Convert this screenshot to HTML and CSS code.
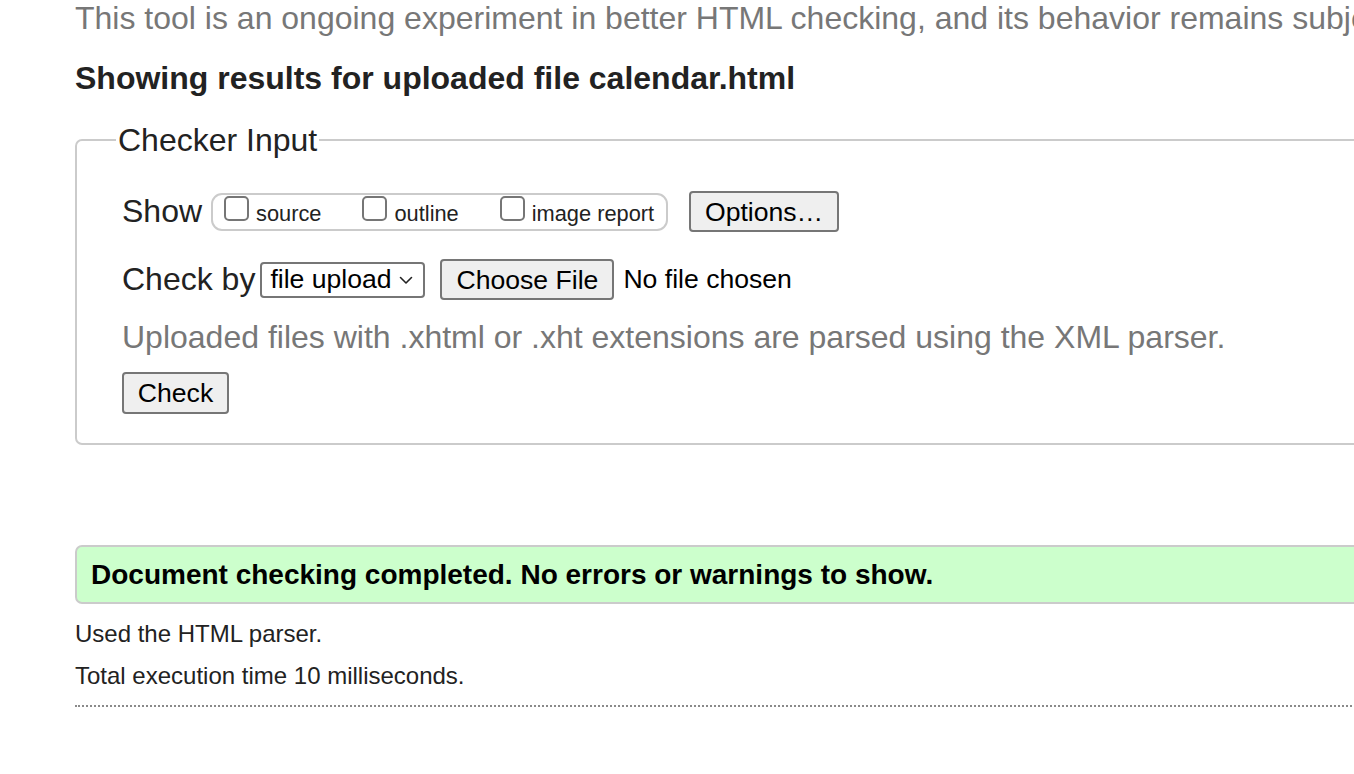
FILE: index.html
```html
<!DOCTYPE html>
<html lang="en">
<head>
<meta charset="utf-8">
<title>Nu Html Checker</title>
<link rel="stylesheet" href="styles.css">
</head>
<body>
<main class="page">
  <p class="intro">This tool is an ongoing experiment in better HTML checking, and its behavior remains subject to change</p>
  <h2 class="results-title">Showing results for uploaded file calendar.html</h2>
  <form class="checker-form">
    <fieldset class="checker">
      <legend class="checker-legend">Checker Input</legend>
      <div class="row row-show">
        <span class="row-label">Show</span>
        <div class="show-group">
          <label class="opt"><span class="cb"></span><span class="opt-text">source</span></label>
          <label class="opt"><span class="cb"></span><span class="opt-text">outline</span></label>
          <label class="opt"><span class="cb"></span><span class="opt-text">image report</span></label>
        </div>
        <button type="button" class="btn btn-options">Options…</button>
      </div>
      <div class="row row-check">
        <span class="row-label">Check by</span>
        <span class="select">file upload<svg class="chev" width="14" height="9" viewBox="0 0 14 9"><path d="M1.5 1.5 L7 7 L12.5 1.5" fill="none" stroke="#222" stroke-width="1.6" stroke-linecap="round" stroke-linejoin="round"/></svg></span>
        <button type="button" class="btn btn-file">Choose File</button>
        <span class="file-status">No file chosen</span>
      </div>
      <p class="hint">Uploaded files with .xhtml or .xht extensions are parsed using the XML parser.</p>
      <button type="button" class="btn btn-check">Check</button>
    </fieldset>
  </form>
  <div class="success">Document checking completed. No errors or warnings to show.</div>
  <p class="meta meta-first">Used the HTML parser.</p>
  <p class="meta">Total execution time 10 milliseconds.</p>
  <hr class="dotted">
</main>
</body>
</html>
```

FILE: styles.css
```css
html, body {
  margin: 0;
  padding: 0;
  overflow: hidden;
  background: #fff;
}

body {
  font-family: "Liberation Sans", Arial, Helvetica, sans-serif;
  color: #222;
}

.page {
  margin-left: 75px;
  width: 1400px;
}

.intro {
  margin: 0;
  font-size: 32px;
  line-height: 36.8px;
  color: #777;
  white-space: nowrap;
}

.results-title {
  margin: 23px 0 0 0;
  font-size: 32px;
  line-height: 36.8px;
  font-weight: bold;
  color: #222;
}

.checker-form {
  margin: 0;
}

.checker {
  margin: 25px 0 0 0;
  padding: 33px 0 29px 45px;
  border: 2px solid #cbcbcb;
  border-radius: 7px;
  min-width: 0;
}

.checker-legend {
  margin-left: -6px;
  padding: 0 2px;
  font-size: 32px;
  line-height: 36.8px;
  color: #222;
}

.row {
  display: flex;
  align-items: center;
  height: 41px;
}

.row-label {
  font-size: 32px;
  line-height: 36.8px;
  color: #222;
}

.row-show {
  margin-bottom: 27px;
}

.show-group {
  display: flex;
  align-items: center;
  box-sizing: border-box;
  height: 38px;
  margin-left: 9px;
  padding: 0 12px 0 11px;
  border: 2px solid #cbcbcb;
  border-radius: 11px;
  gap: 41px;
}

.opt {
  display: flex;
  align-items: center;
  gap: 7px;
  font-size: 21.8px;
  color: #222;
}

.cb {
  display: inline-block;
  box-sizing: border-box;
  width: 25px;
  height: 25px;
  border: 2px solid #767676;
  border-radius: 5px;
  background: #fff;
  position: relative;
  top: -3px;
}

.opt-text {
  position: relative;
  top: 2px;
}

.btn {
  box-sizing: border-box;
  height: 41px;
  margin: 0;
  padding: 0 15px;
  font-family: "Liberation Sans", Arial, Helvetica, sans-serif;
  font-size: 26.6px;
  line-height: 1;
  color: #000;
  background: #efefef;
  border: 2px solid #767676;
  border-radius: 4px;
}

.btn-options {
  margin-left: 21px;
  width: 150px;
  padding: 0;
}

.select {
  display: inline-flex;
  align-items: center;
  box-sizing: border-box;
  height: 36px;
  width: 165px;
  margin-left: 5px;
  padding: 0 10px 0 8px;
  justify-content: space-between;
  font-size: 26.6px;
  color: #000;
  border: 2px solid #767676;
  border-radius: 4px;
  background: #fff;
}

.chev {
  display: block;
  margin-top: 2px;
}

.btn-file {
  margin-left: 15px;
  width: 174px;
  padding: 0;
}

.file-status {
  margin-left: 9px;
  font-size: 26.6px;
  color: #000;
}

.hint {
  margin: 19px 0 16px 0;
  font-size: 32px;
  line-height: 36.8px;
  color: #777;
}

.btn-check {
  display: block;
  width: 107px;
  height: 42px;
  padding: 0;
}

.success {
  margin-top: 100px;
  box-sizing: border-box;
  height: 59px;
  padding: 12px 14px 0 14px;
  font-size: 28px;
  line-height: 32px;
  font-weight: bold;
  color: #000;
  background: #ccffcc;
  border: 2px solid #cbcbcb;
  border-radius: 7px;
}

.meta {
  margin: 14px 0 0 0;
  font-size: 24px;
  line-height: 27.6px;
  color: #222;
}

.meta-first {
  margin-top: 16px;
}

.dotted {
  margin: 16px 0 0 0;
  height: 0;
  border: 0;
  border-top: 2px dotted #8a8a8a;
}
```
